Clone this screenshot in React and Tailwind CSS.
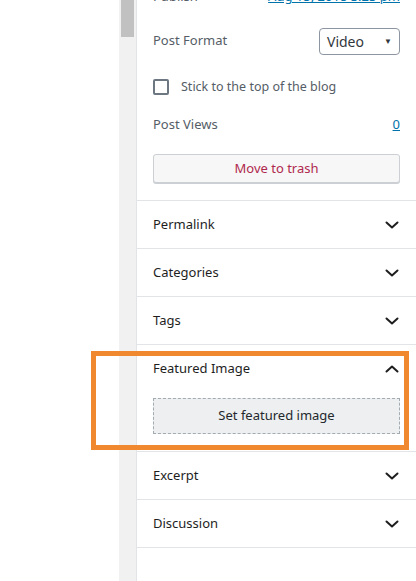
import React from 'react'

const font = { fontFamily: '"Noto Sans", "Open Sans", sans-serif' }

function ChevronDown() {
  return (
    <svg width="16" height="16" viewBox="0 0 16 16" fill="none" className="text-[#1e1e1e]">
      <path d="M2.5 5.5 8 10.5l5.5-5" stroke="currentColor" strokeWidth="2" strokeLinecap="round" strokeLinejoin="round" />
    </svg>
  )
}

function ChevronUp() {
  return (
    <svg width="16" height="16" viewBox="0 0 16 16" fill="none" className="text-[#1e1e1e]">
      <path d="M2.5 10.5 8 5.5l5.5 5" stroke="currentColor" strokeWidth="2" strokeLinecap="round" strokeLinejoin="round" />
    </svg>
  )
}

function Section({ title }) {
  return (
    <div className="h-[48px] border-b border-[#e2e4e7] px-4 flex items-center justify-between">
      <span className="text-[13px] text-[#1e1e1e]">{title}</span>
      <ChevronDown />
    </div>
  )
}

export default function App() {
  return (
    <div className="relative flex h-[581px] w-[416px] overflow-hidden bg-white" style={font}>
      {/* empty editor area */}
      <div className="w-[119px] bg-white" />

      {/* scrollbar strip */}
      <div className="w-[17px] bg-[#f1f1f1] flex justify-center">
        <div className="w-[13px] h-[37px] bg-[#c1c1c1]" />
      </div>

      {/* sidebar */}
      <div className="flex-1 border-l border-[#e2e4e7] bg-white flex flex-col">
        <div className="border-b border-[#e2e4e7] px-4 pb-[17px]">
          <div className="-mt-[19px] h-[32px] flex items-center justify-between text-[13px]">
            <span className="text-[#555d66]">Publish</span>
            <span className="text-[#0073aa] underline">Aug 15, 2018 3:23 pm</span>
          </div>

          <div className="h-[56px] flex items-center justify-between">
            <span className="text-[13px] text-[#555d66]">Post Format</span>
            <div className="w-[81px] h-[27px] border border-[#8d96a0] rounded-[4px] flex items-center justify-between pl-[7px] pr-[7px]">
              <span className="text-[14px] text-[#32373c]">Video</span>
              <span className="text-[8px] text-[#32373c]">▼</span>
            </div>
          </div>

          <div className="h-[36px] flex items-center gap-[12px]">
            <div className="w-[16px] h-[16px] border-2 border-[#6c7781] rounded-[2px]" />
            <span className="text-[12.5px] text-[#555d66]">Stick to the top of the blog</span>
          </div>

          <div className="h-[40px] flex items-center justify-between">
            <span className="text-[13px] text-[#555d66]">Post Views</span>
            <span className="text-[13px] text-[#0073aa] underline">0</span>
          </div>

          <div className="mt-[9px] h-[29px] rounded-[3px] border border-[#ccd0d4] bg-[#f7f7f7] shadow-[0_1px_0_#ccd0d4] flex items-center justify-center">
            <span className="text-[13px] text-[#b0294e]">Move to trash</span>
          </div>
        </div>

        <Section title="Permalink" />
        <Section title="Categories" />
        <Section title="Tags" />

        <div className="border-b border-[#e2e4e7] px-4 pb-[17px]">
          <div className="h-[48px] flex items-center justify-between">
            <span className="text-[13px] text-[#1e1e1e]">Featured Image</span>
            <ChevronUp />
          </div>
          <div className="mt-[5px] h-[36px] border border-dashed border-[#a2aab2] bg-[#edeff0] flex items-center justify-center">
            <span className="text-[13px] text-[#23282d]">Set featured image</span>
          </div>
        </div>

        <Section title="Excerpt" />
        <Section title="Discussion" />
      </div>

      {/* highlight annotation */}
      <div className="absolute left-[91px] top-[351px] w-[318px] h-[99px] border-[5px] border-[#f0882f] pointer-events-none" />
    </div>
  )
}
